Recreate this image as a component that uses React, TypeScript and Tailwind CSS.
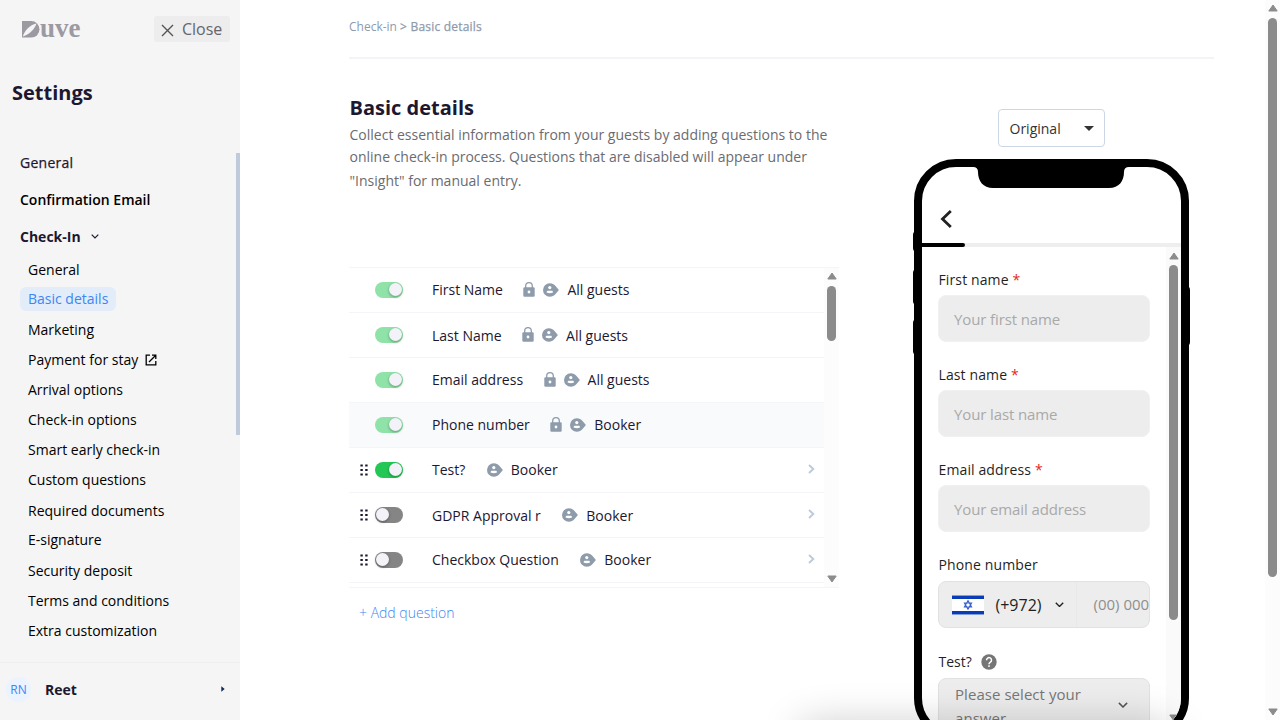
import React from "react";

const checkInItems = [
  { label: "General", cls: "h-[29px]" },
  { label: "Basic details", cls: "h-[31px]", active: true },
  { label: "Marketing", cls: "h-[30px]" },
  { label: "Payment for stay", cls: "h-[30px]", external: true },
  { label: "Arrival options", cls: "h-[30px]" },
  { label: "Check-in options", cls: "h-[30px]" },
  { label: "Smart early check-in", cls: "h-[30px]" },
  { label: "Custom questions", cls: "h-[31px]" },
  { label: "Required documents", cls: "h-[29px]" },
  { label: "E-signature", cls: "h-[31px]" },
  { label: "Security deposit", cls: "h-[30px]" },
  { label: "Terms and conditions", cls: "h-[30px]" },
  { label: "Extra customization", cls: "h-[30px]" },
];

type Question = {
  label: string;
  who: string;
  locked?: boolean;
  on?: boolean;
  highlighted?: boolean;
  low?: boolean;
};

const questions: Question[] = [
  { label: "First Name", who: "All guests", locked: true, on: true },
  { label: "Last Name", who: "All guests", locked: true, on: true, low: true },
  { label: "Email address", who: "All guests", locked: true, on: true },
  { label: "Phone number", who: "Booker", locked: true, on: true, highlighted: true },
  { label: "Test?", who: "Booker", on: true },
  { label: "GDPR Approval r", who: "Booker", low: true },
  { label: "Checkbox Question", who: "Booker" },
];

function Logo() {
  return (
    <div className="flex h-[17px] w-[60px] items-start text-[#9c99a3]">
      <svg width="18" height="17" viewBox="0 0 18 17" className="shrink-0">
        <path d="M0 0H9.2A8.3 8.3 0 0 1 9.2 16.6H0Z" fill="currentColor" />
        <path d="M0.8 15.4C3 9.5 7.5 4.2 14.4 2.6C13 7.6 8 13.4 0.8 15.4Z" fill="#f5f5f5" />
      </svg>
      <span className="font-['Liberation_Serif',serif] text-[27px] font-bold leading-[14px]">uve</span>
    </div>
  );
}

function Lock() {
  return (
    <svg width="12" height="15" viewBox="0 0 12 15" className="shrink-0">
      <path d="M2.7 6V4A3.3 3.3 0 0 1 9.3 4V6" fill="none" stroke="#8e9bab" strokeWidth="1.3" />
      <rect x="0.3" y="5.2" width="11.4" height="9.6" rx="1.2" fill="#8e9bab" />
      <circle cx="6" cy="10" r="1.4" fill="#fff" />
    </svg>
  );
}

function GuestTag() {
  return (
    <svg width="16" height="14" viewBox="0 0 16 14" className="shrink-0">
      <path d="M6.8 0.2C9.3 0.2 11 1.2 12.3 2.7L15.9 7L12.3 11.3C11 12.8 9.3 13.8 6.8 13.8A6.8 6.8 0 0 1 6.8 0.2Z" fill="#8e9bab" />
      <circle cx="6.8" cy="4.6" r="1.6" fill="#fff" />
      <path d="M3.6 9.6C3.6 7 5.4 7.8 6.8 7.8S10 7 10 9.6Q6.8 11 3.6 9.6Z" fill="#fff" />
    </svg>
  );
}

function Toggle({ on, locked }: { on?: boolean; locked?: boolean }) {
  const track = on ? (locked ? "bg-[#8fe3a8] justify-end" : "bg-[#22c755] justify-end") : "bg-[#858585] justify-start";
  return (
    <div className={`flex h-4 w-7 items-center rounded-full px-px ${track}`}>
      <div className="size-[13px] rounded-full bg-[#f3f2f9] shadow-[0_1px_3px_rgba(0,0,0,0.35)]" />
    </div>
  );
}

function Grip() {
  return (
    <svg width="9" height="12" viewBox="0 0 9 12">
      {[0.5, 5, 9.5].map((y) => (
        <g key={y} fill="#1d1730">
          <rect x="0.4" y={y} width="2.4" height="2" />
          <rect x="5.2" y={y} width="2.4" height="2" />
        </g>
      ))}
    </svg>
  );
}

function Arrow({ down }: { down?: boolean }) {
  return (
    <svg width="10" height="8" viewBox="0 0 10 8" className={down ? "rotate-180" : ""}>
      <path d="M5 1L9.2 7H0.8Z" fill="#8b8b8b" stroke="#8b8b8b" strokeWidth="1" strokeLinejoin="round" />
    </svg>
  );
}

function Chevron({ cls, size = 8 }: { cls: string; size?: number }) {
  return (
    <svg width={size} height={size * 0.625} viewBox="0 0 8 5" fill="none" className={cls}>
      <path d="M0.7 0.7L4 4L7.3 0.7" stroke="currentColor" strokeWidth="1.2" />
    </svg>
  );
}

function Sidebar() {
  return (
    <aside className="relative flex h-full w-[240px] shrink-0 flex-col bg-[#f5f5f5] text-sm text-[#1d1730]">
      <div className="flex h-[58px] shrink-0 items-center justify-between pl-[22px] pr-[10px]">
        <Logo />
        <button className="flex h-[26px] w-[76px] items-center gap-2 rounded-[3px] bg-[#ededee] pl-[7px] text-base text-[#66656b]">
          <svg width="13" height="13" viewBox="0 0 13 13" className="mt-[2px]">
            <path d="M1 1L12 12M12 1L1 12" stroke="#555" strokeWidth="1.4" />
          </svg>
          <span>Close</span>
        </button>
      </div>
      <h1 className="mt-5 pl-3 text-xl font-bold leading-[30px]">Settings</h1>
      <nav className="mt-10 flex flex-col pl-5">
        <div className="h-[37px] leading-[30px] tracking-[0.25px] [-webkit-text-stroke:0.25px]">General</div>
        <div className="h-[37px] font-semibold leading-[30px] text-black">Confirmation Email</div>
        <div className="flex h-[33px] items-start font-bold leading-[30px]">
          Check-In
          <Chevron cls="ml-[10px] mt-[12px]" />
        </div>
        {checkInItems.map((item) => (
          <div key={item.label} className={`flex items-start pl-2 leading-[30px] text-black ${item.cls}`}>
            {item.active ? (
              <span className="-ml-2 mt-[3px] rounded-md bg-[#e2edf9] px-2 leading-6 text-[#3d86f5]">{item.label}</span>
            ) : (
              <span>{item.label}</span>
            )}
            {item.external && (
              <svg width="12" height="12" viewBox="0 0 12 12" fill="none" stroke="#000" strokeWidth="1.3" className="ml-[7px] mt-[9px]">
                <path d="M5 1.2H1.2V10.8H10.8V7M7 1.2H10.8V5M10.8 1.2L4 8" />
              </svg>
            )}
          </div>
        ))}
      </nav>
      <div className="mt-auto flex h-[58px] items-center border-t border-[#efefef] pb-1 pl-[6px] pr-[15px]">
        <div className="flex size-[25px] items-center justify-center rounded-full bg-[#eaf3ff] text-xs text-[#3d86f5]">RN</div>
        <span className="ml-[14px] font-bold">Reet</span>
        <svg width="4" height="6" viewBox="0 0 4 6" className="mb-[2px] ml-auto">
          <path d="M0.3 0.2L3.7 3L0.3 5.8Z" fill="#10285a" />
        </svg>
      </div>
      <div className="absolute right-0 top-[153px] h-[282px] w-1 bg-[#bfcada]" />
    </aside>
  );
}

function QuestionRow({ q }: { q: Question }) {
  const textPad = q.low ? "pt-[3px]" : "pt-px";
  return (
    <div className={`flex h-[45px] items-center border-b border-[#f4f5f8] pb-px ${q.highlighted ? "bg-[#f8fafc]" : "bg-white"}`}>
      <div className="flex w-[25.5px] justify-start pl-[11px]">{!q.locked && <Grip />}</div>
      <Toggle on={q.on} locked={q.locked} />
      <div className="ml-[29.5px] flex items-center">
        <span className={textPad}>{q.label}</span>
        <span className={`flex items-center gap-2 ${q.locked ? "ml-[20.5px]" : "ml-[21.5px]"}`}>
          {q.locked && <Lock />}
          <GuestTag />
          <span className={textPad}>{q.who}</span>
        </span>
      </div>
      {!q.locked && (
        <svg width="7" height="10" viewBox="0 0 7 10" fill="none" className="mb-px ml-auto mr-[9.5px]">
          <path d="M1 1L5.3 5L1 9" stroke="#bccadb" strokeWidth="1.9" />
        </svg>
      )}
    </div>
  );
}

function QuestionList() {
  return (
    <div className="mt-[74px] flex h-[321px] w-[490px] border-y border-[#f4f5f8] text-sm text-[#1d1730]">
      <div className="flex-1">
        {questions.map((q) => (
          <QuestionRow key={q.label} q={q} />
        ))}
      </div>
      <div className="flex w-[15px] flex-col items-center bg-[#fcfcfc] pb-[4px] pt-1">
        <Arrow />
        <div className="mt-[6px] h-[55px] w-[9px] rounded-full bg-[#8b8b8b]" />
        <div className="flex-1" />
        <Arrow down />
      </div>
    </div>
  );
}

function Field({ label, placeholder }: { label: string; placeholder: string }) {
  return (
    <div className="h-[95px]">
      <div className="h-5 pl-[0.5px] leading-5 tracking-[0.12px]">
        {label} <span className="text-[#e02b20]">*</span>
      </div>
      <div className="mt-[5px] flex h-[47px] items-center rounded-lg border border-[#f1f1f1] bg-[#ededed] pl-[15px] pt-[2px] text-[15px] tracking-[-0.12px] text-[#a9a9a9]">
        {placeholder}
      </div>
    </div>
  );
}

function Flag() {
  return (
    <svg width="32" height="20" viewBox="0 0 32 20" className="shrink-0">
      <rect width="32" height="20" fill="#fff" />
      <rect y="0.5" width="32" height="3.5" fill="#0a3cb8" />
      <rect y="16" width="32" height="3.5" fill="#0a3cb8" />
      <path d="M16 5.6L19.6 12H12.4ZM16 14.2L12.4 8H19.6Z" fill="none" stroke="#3a62cc" strokeWidth="1.1" />
    </svg>
  );
}

function Phone() {
  return (
    <div className="relative h-[581px] w-[275.5px]">
      <div className="absolute -left-[1px] top-[72px] h-[21px] w-2 rounded-l-sm bg-black" />
      <div className="absolute -left-[1px] top-[110px] h-[36px] w-2 rounded-l-sm bg-black" />
      <div className="absolute -left-[1px] top-[160px] h-[36px] w-2 rounded-l-sm bg-black" />
      <div className="absolute -right-[1px] top-[127px] h-[60px] w-2 rounded-r-sm bg-black" />
      <div className="relative flex h-full w-full flex-col overflow-hidden rounded-[42px] border-8 border-black bg-white text-sm text-[#1f1f24]">
        <svg width="156" height="22" viewBox="0 0 156 22" className="absolute -top-px left-[51.5px]">
          <path d="M0 0H156V1Q151 1 151 6C151 15 146 22 136 22H20C10 22 5 15 5 6Q5 1 0 1Z" fill="#000" />
        </svg>
        <div className="flex h-[76px] shrink-0 items-end pb-[15.5px] pl-[18px]">
          <svg width="13" height="18" viewBox="0 0 13 18" fill="none">
            <path d="M10.8 1L2.5 9L10.8 17" stroke="#222" strokeWidth="2.8" />
          </svg>
        </div>
        <div className="h-1 shrink-0 bg-[#eeeeee]">
          <div className="h-1 w-[43px] rounded-r-sm bg-black" />
        </div>
        <div className="flex flex-1 justify-between">
          <div className="ml-[16.5px] w-[212px] pt-[23px]">
            <Field label="First name" placeholder="Your first name" />
            <Field label="Last name" placeholder="Your last name" />
            <Field label="Email address" placeholder="Your email address" />
            <div className="h-[97px]">
              <div className="h-5 pl-[0.5px] leading-5 tracking-[0.12px]">Phone number</div>
              <div className="mt-[6px] flex h-[47px] items-center overflow-hidden rounded-lg border border-[#e1e1e1] bg-[#ededed] pl-[12.5px]">
                <Flag />
                <span className="ml-3 mt-px text-base">(+972)</span>
                <Chevron cls="ml-[13px] shrink-0" size={9} />
                <div className="ml-3 flex h-full items-center overflow-hidden whitespace-nowrap border-l border-[#e8e8e8] pl-[17px] pt-px text-[15px] text-[#8f8f8f]">
                  (00) 000
                </div>
              </div>
            </div>
            <div className="flex h-5 items-center gap-[9px] pl-[0.5px] leading-5">
              Test?
              <svg width="16" height="16" viewBox="0 0 16 16" className="mb-px">
                <circle cx="8" cy="8" r="7.7" fill="#757575" />
                <path d="M5.5 6.2A2.5 2.5 0 1 1 9.4 8.2Q8 9.1 8 10.2" fill="none" stroke="#fff" strokeWidth="1.5" />
                <rect x="7.2" y="11.3" width="1.6" height="1.6" fill="#fff" />
              </svg>
            </div>
            <div className="mt-[6px] flex h-[60px] items-start justify-between rounded-lg border border-[#e1e1e1] bg-[#ededed] pl-4 pr-[21px] pt-[3px] text-[15px] leading-6 text-[#777]">
              <span className="w-[140px] tracking-[0.05px]">Please select your answer</span>
              <Chevron cls="mt-5 text-[#555]" size={10} />
            </div>
          </div>
          <div className="flex h-[475px] w-[15px] flex-col items-center bg-[#fafafa] pt-[5px]">
            <Arrow />
            <div className="mt-[5px] h-[355px] w-[9px] shrink-0 rounded-full bg-[#8b8b8b]" />
            <div className="mt-[94px]">
              <Arrow down />
            </div>
          </div>
        </div>
      </div>
    </div>
  );
}

export default function App() {
  return (
    <div className="relative flex h-[720px] w-[1280px] overflow-hidden bg-white font-['Open_Sans',sans-serif]">
      <Sidebar />
      <main className="flex-1 pl-[109px]">
        <div className="flex h-[57px] w-[865px] items-start pt-[18px] text-xs leading-[18px] text-[#8e9bab]">
          <span className="whitespace-pre">
            Check-in <span className="tracking-[0.2px] [-webkit-text-stroke:0.25px]">&gt; Basic details</span>
          </span>
        </div>
        <div className="h-[2px] w-[865px] bg-[#f3f4f8]" />
        <div className="flex">
          <section className="w-[490.5px] pt-[34px]">
            <h2 className="pl-[0.5px] text-xl font-bold leading-[30px] text-[#1d1730]">Basic details</h2>
            <p className="whitespace-nowrap pl-[0.5px] text-sm text-[#6b6b70]">
              <span className="block h-[22px] leading-6">Collect essential information from your guests by adding questions to the</span>
              <span className="block h-6 leading-6">online check-in process. Questions that are disabled will appear under</span>
              <span className="block h-6 leading-6">"Insight" for manual entry.</span>
            </p>
            <QuestionList />
            <button className="ml-[10px] mt-[13px] text-sm font-light leading-6 text-[#3d86f5]">+ Add question</button>
          </section>
          <section className="ml-[74px] flex flex-col items-center pt-[50px]">
            <div className="flex h-[38px] w-[106.5px] items-center justify-between rounded border border-[#cbd6e6] pl-[10.5px] pr-[10px] text-sm text-[#333]">
              <span className="pt-px">Original</span>
              <svg width="10" height="5" viewBox="0 0 10 5">
                <path d="M0 0H10L5 5Z" fill="#333" />
              </svg>
            </div>
            <div className="mt-3">
              <Phone />
            </div>
          </section>
        </div>
      </main>
      <div className="flex h-full w-[15px] shrink-0 flex-col items-center bg-[#fcfcfc] pb-1 pt-1">
        <Arrow />
        <div className="mt-[6px] h-[559px] w-[9px] rounded-full bg-[#8b8b8b]" />
        <div className="flex-1" />
        <Arrow down />
      </div>
      <div className="absolute left-[800px] top-[724px] h-10 w-[370px] rounded-xl shadow-[0_0_40px_rgba(0,0,0,0.22)]" />
    </div>
  );
}
